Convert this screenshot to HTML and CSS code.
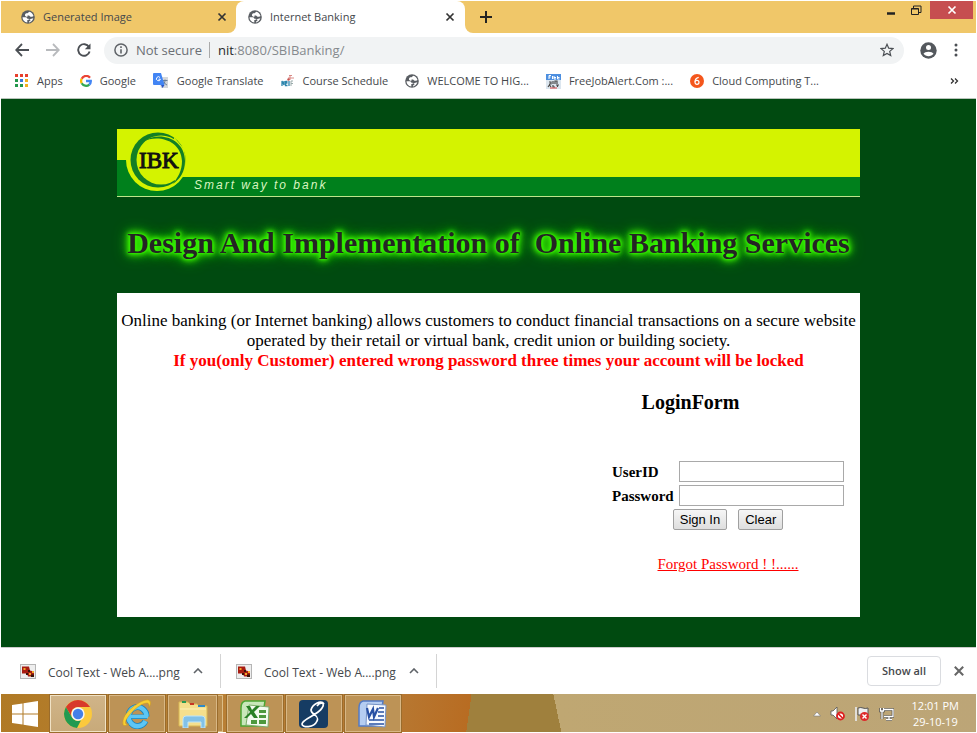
FILE: index.html
```html
<!DOCTYPE html>
<html lang="en">
<head>
<meta charset="utf-8">
<title>Internet Banking</title>
<link rel="stylesheet" href="styles.css">
</head>
<body>
<svg class="defs" width="0" height="0" aria-hidden="true">
  <symbol id="globe" viewBox="0 0 14 14">
    <circle cx="7" cy="7" r="6.800" fill="#5a5e63"/>
    <path d="M1.500 7.200h3.300c1.200 0 1.500.8 1.500 1.500h1.400v1.300H6.300v2.500C3.500 12 1.500 10 1.500 7.200zM12.300 8.300C11.800 10.600 10 12.200 8 12.500v-1.300h1.300V9.500H7.500M5 3.300h1.500L8.300 1.700c2 .5 3.600 2 4.200 4.300l-1.300.8H9.500L8 5.500H6.500v1.300H5.200L4 5.800V4.500z" fill="#fff"/>
  </symbol>
  <symbol id="cross" viewBox="0 0 10 10"><path d="M1.500 1.500l7 7m0-7l-7 7" fill="none" stroke="currentColor" stroke-width="1.700"/></symbol>
  <symbol id="chevron" viewBox="0 0 10 6"><path d="M1 5l4-4 4 4" fill="none" stroke="#5f6368" stroke-width="1.600"/></symbol>
  <symbol id="png" viewBox="0 0 16 15">
    <rect x=".5" y=".5" width="15" height="14" fill="#eee" stroke="#b5b5b5"/>
    <path d="M2 2.500h7l1 4 4 1v5H8l-1-3H2z" fill="#a81c12"/>
    <path d="M3.500 4h2v2h-2zM9 9h2v2H9zM12 7h2v2h-2z" fill="#f4a72a"/>
    <path d="M8 6h2v2H8zM11 10.500h3V13h-3zM6 9h2v2H6z" fill="#3a1208"/>
  </symbol>
</svg>

<header class="browser">
  <div class="tabstrip">
    <div class="tab">
      <svg class="icon14"><use href="#globe"/></svg>
      <span class="tab-title">Generated Image</span>
      <button class="plain" aria-label="Close tab"><svg class="icon10"><use href="#cross"/></svg></button>
    </div>
    <div class="tab active">
      <svg class="icon14"><use href="#globe"/></svg>
      <span class="tab-title">Internet Banking</span>
      <button class="plain" aria-label="Close tab"><svg class="icon10"><use href="#cross"/></svg></button>
    </div>
    <div class="tab-rest">
      <button class="plain" aria-label="New tab"><svg width="12" height="12" viewBox="0 0 12 12"><path d="M6 0v12M0 6h12" stroke="#222" stroke-width="2"/></svg></button>
      <div class="window-buttons">
        <button class="plain win" aria-label="Minimize"><svg width="10" height="12" viewBox="0 0 10 12"><path d="M1 9.500h8" stroke="#222" stroke-width="2.500"/></svg></button>
        <button class="plain win" aria-label="Restore"><svg width="11" height="11" viewBox="0 0 11 11"><path d="M.5 3.500h7v6h-7zM.5 4h7" fill="none" stroke="#222"/><path d="M2.500 3V1h7.500v6.500H8" fill="none" stroke="#222"/></svg></button>
        <button class="plain win close" aria-label="Close"><svg class="icon10"><use href="#cross"/></svg></button>
      </div>
    </div>
  </div>

  <div class="toolbar">
    <button class="plain" aria-label="Back"><svg width="14" height="14" viewBox="0 0 14 14"><path d="M14 7H1.500M7 1L1.200 7 7 13" fill="none" stroke="#4b4f54" stroke-width="1.800"/></svg></button>
    <button class="plain" aria-label="Forward"><svg width="14" height="14" viewBox="0 0 14 14"><path d="M0 7h12.500M7 1l5.800 6L7 13" fill="none" stroke="#b8babd" stroke-width="1.800"/></svg></button>
    <button class="plain" aria-label="Reload"><svg width="14" height="14" viewBox="0 0 14 14"><path d="M12 4a5.800 5.800 0 1 0 .6 4.500" fill="none" stroke="#4b4f54" stroke-width="1.900"/><path d="M13.500.5v5.700H7.800z" fill="#4b4f54"/></svg></button>
    <div class="address">
      <svg width="14" height="14" viewBox="0 0 14 14"><circle cx="7" cy="7" r="6.100" fill="none" stroke="#5f6368" stroke-width="1.500"/><path d="M7 6.200v4.300M7 3.300v1.700" stroke="#5f6368" stroke-width="1.600"/></svg>
      <span class="secure">Not secure</span>
      <span class="url"><span class="host">nit</span>:8080/SBIBanking/</span>
      <svg class="star" width="14" height="14" viewBox="0 0 14 14"><path d="M7 1.300l1.700 3.900 4.200.4-3.200 2.800 1 4.200L7 10.400l-3.700 2.200 1-4.200L1.100 5.600l4.200-.4z" fill="none" stroke="#4b4f54" stroke-width="1.200"/></svg>
    </div>
    <svg width="17" height="17" viewBox="0 0 17 17"><circle cx="8.500" cy="8.500" r="8.200" fill="#54585d"/><circle cx="8.500" cy="5.600" r="2.500" fill="#fff"/><path d="M3.500 11.800c1-2.700 9-2.700 10 0-2.300 3.300-7.700 3.300-10 0z" fill="#fff"/></svg>
    <button class="plain" aria-label="Menu"><svg width="4" height="14" viewBox="0 0 4 14"><g fill="#4b4f54"><circle cx="2" cy="2" r="1.500"/><circle cx="2" cy="7" r="1.500"/><circle cx="2" cy="12" r="1.500"/></g></svg></button>
  </div>

  <nav class="bookmarks" aria-label="Bookmarks">
    <a href="#"><svg width="14" height="14" viewBox="0 0 14 14"><path d="M0 0h3v3H0zM5 0h3v3H5zM10 0h3v3h-3z" fill="#e8402c"/><path d="M0 5h3v3H0z" fill="#23984c"/><path d="M5 5h3v3H5z" fill="#3878dd"/><path d="M10 5h3v3h-3z" fill="#f2b01e"/><path d="M0 10h3v3H0zM5 10h3v3H5z" fill="#23984c"/><path d="M10 10h3v3h-3z" fill="#f2b01e"/></svg>Apps</a>
    <a href="#"><svg width="12" height="12" viewBox="0 0 12 12"><g fill="none" stroke-width="2.300"><path d="M10 2.700A5 5 0 0 0 1.700 3.700" stroke="#ea4335"/><path d="M1.700 3.700a5 5 0 0 0 0 4.600" stroke="#fbbc05"/><path d="M1.700 8.300A5 5 0 0 0 9.300 9.600" stroke="#34a853"/><path d="M9.300 9.600A4.500 4.500 0 0 0 10.800 6H6" stroke="#4285f4"/></g></svg>Google</a>
    <a href="#"><svg width="16" height="16" viewBox="0 0 16 16"><path d="M5 4h10v11H8z" fill="#d4d7db"/><path d="M9.500 7.500h5M12 6.500v1c0 2-1 3.500-2.500 4.500M10.500 8.500c.6 1.500 1.800 2.600 3.500 3.500" fill="none" stroke="#6b7f98"/><path d="M0 1q0-1 1-1h7l3.500 12H1q-1 0-1-1z" fill="#4285f4"/><path d="M7 4.500a2 2 0 1 0 .4 1.700H5.500" fill="none" stroke="#fff"/><path d="M8 12h3.500L9.500 15z" fill="#2a56c6"/></svg>Google Translate</a>
    <a href="#"><svg width="14" height="14" viewBox="0 0 14 14"><path d="M1 12V7l2 4V7M4.500 7v4.500h2M4.500 9h2M4.500 7.500h2M8 7v5" fill="none" stroke="#2e86ad" stroke-width="1.300"/><path d="M7 4h6M9 2v4M8 1.500h3" fill="none" stroke="#d98a86"/><path d="M10 12V7h2M10 9.500h2" fill="none" stroke="#9aa"/><circle cx="7.500" cy="5.500" r="1.200" fill="#c9524f"/></svg>Course Schedule</a>
    <a href="#"><svg class="icon14"><use href="#globe"/></svg>WELCOME TO HIG...</a>
    <a href="#"><svg width="15" height="15" viewBox="0 0 15 15"><rect width="15" height="15" fill="#dce6ef"/><path d="M0 0h15v6H0z" fill="#4d8fe0"/><path d="M3 5V1.500h2M3 3h1.500M6.500 5V2M8 2v3h2M8 3.500h2M11.500 2v3h2M11.500 3.500h2" stroke="#fff" fill="none"/><path d="M3 8h2v2H3M7 7v3M9 10V7h2v3M2 13l1.500-2L5 13M7 11v2h2M10 11h3M11.500 11v2" fill="none" stroke="#4a4a4a" stroke-width="1.200"/><path d="M4 14h7" stroke="#dd4444"/></svg>FreeJobAlert.Com :...</a>
    <a href="#"><svg width="14" height="14" viewBox="0 0 14 14"><circle cx="7" cy="7" r="7" fill="#f4561c"/><path d="M8.700 3.300C6 4 5 5.600 5 7.800" fill="none" stroke="#fff" stroke-width="1.200"/><circle cx="7" cy="8.300" r="2" fill="none" stroke="#fff" stroke-width="1.200"/></svg>Cloud Computing T...</a>
    <button class="plain more" aria-label="More bookmarks"><svg width="9" height="8" viewBox="0 0 9 8"><path d="M1 1.500L3.500 4 1 6.500M5 1.500L7.500 4 5 6.500" fill="none" stroke="#333" stroke-width="1.300"/></svg></button>
  </nav>
</header>

<main class="page">
  <div class="banner">
    <svg class="logo" width="72" height="67" viewBox="0 0 72 67" role="img" aria-label="IBK">
      <path d="M0 31h14v17h58v19H0z" fill="#00801c"/>
      <circle cx="40" cy="31" r="31" fill="#d4f300"/>
      <circle cx="41" cy="31" r="27.500" fill="#137f25"/>
      <circle cx="44" cy="31" r="24.500" fill="#d4f300"/>
      <path d="M57 8l10 12 2 22-11 14z" fill="#d4f300"/>
      <path d="M26 13C41 1 68 9 68 32c0 11-5 18-12 23 5-7 9-13 9-23C64 11 40 5 26 13z" fill="#137f25"/>
      <text class="logo-text" x="22" y="39">IBK</text>
    </svg>
    <div class="stripe"><span>Smart way to bank</span></div>
  </div>
  <h1>Design And Implementation of  Online Banking Services</h1>
  <section class="panel">
    <p>Online banking (or Internet banking) allows customers to conduct financial transactions on a secure website operated by their retail or virtual bank, credit union or building society.</p>
    <p class="warning">If you(only Customer) entered wrong password three times your account will be locked</p>
    <form class="login">
      <h2>LoginForm</h2>
      <div class="fields">
        <label for="user">UserID</label><input id="user" type="text">
        <label for="pass">Password</label><input id="pass" type="password">
      </div>
      <div class="actions"><button type="button">Sign In</button><button type="reset">Clear</button></div>
      <a class="forgot" href="#">Forgot Password ! !......</a>
    </form>
  </section>
</main>

<footer>
  <div class="downloads">
    <div class="download"><svg width="16" height="15"><use href="#png"/></svg><span>Cool Text - Web A....png</span><button class="plain" aria-label="Options"><svg width="10" height="6"><use href="#chevron"/></svg></button></div>
    <div class="download"><svg width="16" height="15"><use href="#png"/></svg><span>Cool Text - Web A....png</span><button class="plain" aria-label="Options"><svg width="10" height="6"><use href="#chevron"/></svg></button></div>
    <button class="show-all">Show all</button>
    <button class="plain dismiss" aria-label="Close downloads"><svg width="12" height="12"><use href="#cross"/></svg></button>
  </div>
  <div class="taskbar">
    <button class="plain start" aria-label="Start"><svg width="26" height="26" viewBox="0 0 26 26"><path d="M0 4l10.500-1.600v10H0zM11.500 2.200L26 0v12.400H11.500zM0 13.500h10.500v10L0 22zM11.500 13.500H26V26l-14.500-2.200z" fill="#fff"/></svg></button>
    <button class="task current" aria-label="Chrome"><svg width="30" height="30" viewBox="0 0 30 30"><circle cx="15" cy="15" r="14" fill="#fbc93d"/><path d="M2.900 8A14 14 0 0 1 27.100 8H15A7 7 0 0 0 9 18.500z" fill="#d8392b"/><path d="M2.900 8L9 18.500A7 7 0 0 0 18 21.300L14 29A14 14 0 0 1 2.900 8z" fill="#229a51"/><circle cx="15" cy="15" r="6.700" fill="#f5f5f5"/><circle cx="15" cy="15" r="5.200" fill="#437fe8"/></svg></button>
    <button class="task" aria-label="Internet Explorer"><svg width="30" height="30" viewBox="0 0 30 30"><path d="M25.500 17H8M25 18.500H9" stroke="#1582bd" stroke-width="3"/><path d="M24.500 17.500A9 9.500 0 1 0 23.500 22" fill="none" stroke="#1582bd" stroke-width="6"/><path d="M24.500 17.500A9 9.500 0 1 0 23.500 22" fill="none" stroke="#5cc6f5" stroke-width="4.500"/><path d="M26 17.500H8" stroke="#5cc6f5" stroke-width="3.500"/><path d="M7 25q-5 3-6 .5Q-1 17 12 7 25-2 28 2q1.500 2-1 7 .5-5-2-5-5 0-13 7-9 9-8.500 13 .5 2.500 3.500 1z" fill="#f8cf31" stroke="#c9951c" stroke-width=".5"/></svg></button>
    <button class="task folder" aria-label="File Explorer"><svg width="30" height="28" viewBox="0 0 30 28"><path d="M1 2h9l2 2h7l2 2h8v20H1z" fill="#f5df8c" stroke="#d9b752"/><path d="M4 1h4v2H4z" fill="#299b52"/><path d="M12 3h4v2h-4z" fill="#c93524"/><path d="M20 5h7v2h-7z" fill="#2f89c8"/><path d="M2 9h26" stroke="#fff2b8"/><path d="M5 28v-9q0-3 3-3h16q3 0 3 3v9h-4v-6H10v6z" fill="#82c1e7" stroke="#bee5fa"/></svg></button>
    <span class="stack"></span>
    <button class="task" aria-label="Excel"><svg width="30" height="28" viewBox="0 0 30 28"><path d="M5 1h20l-4 25H1V8q0-6 4-7z" fill="#c8e7ba" stroke="#4ba532" stroke-width="1.500"/><path d="M9 5l20 2-1 20-22-2z" fill="#f2faef" stroke="#7cac6a"/><path d="M6 6h4l2 4 4-4h4l-6 6 4 6h-4l-3-4-4 4H4l6-6z" fill="#298026"/><path d="M19 10h7v3h-7zM19 15h7v3h-7zM11 20h6v4h-6zM19 20h7v4h-7z" fill="#4e993e"/></svg></button>
    <button class="task" aria-label="Script editor"><svg width="30" height="28" viewBox="0 0 30 28"><rect width="29" height="28" rx="4" fill="#163c63"/><path d="M25 4C22-1 13 5 12 10c0 5 9 5 6 11-3 7-15 7-15 3 0-5 16-9 20-16 4-6-2-6-5-2" fill="none" stroke="#fff" stroke-width="1.700"/></svg></button>
    <button class="task" aria-label="Word"><svg width="30" height="28" viewBox="0 0 30 28"><path d="M5 1h20l-4 25H1V8q0-6 4-7z" fill="#b5cdf1" stroke="#537bc5" stroke-width="1.500"/><path d="M9 4l19 1-1 22-19-2z" fill="#f7faff" stroke="#7693c6"/><path d="M9 8l2 9 4-8 1 8 4-9" fill="none" stroke="#2851a4" stroke-width="2.200"/><path d="M21 8h5M20 12h6M20 16h6M11 20h15M11 24h15" stroke="#2851a4" stroke-width="1.700"/></svg></button>
    <div class="tray">
      <svg width="8" height="6" viewBox="0 0 8 6"><path d="M.5 5L4 1l3.500 4z" fill="#fff" stroke="#777" stroke-width=".6"/></svg>
      <svg width="15" height="15" viewBox="0 0 15 15"><path d="M1 5h2l4-4v12L3 9H1z" fill="#fff" stroke="#555" stroke-width=".8"/><circle cx="10.500" cy="10" r="3.500" fill="#fff" stroke="#dd2020" stroke-width="1.800"/><path d="M8 7.500l5 5" stroke="#dd2020" stroke-width="1.700"/></svg>
      <svg width="16" height="16" viewBox="0 0 16 16"><path d="M2 1v14M4 2q3-1 5 0t5 0v7H4z" fill="#eee" stroke="#555"/><path d="M2 1v14" stroke="#fff" stroke-width="1.500"/><circle cx="10.500" cy="10.500" r="4.500" fill="#dd2b2b"/><path d="M8.500 8.500l4 4m0-4l-4 4" stroke="#fff" stroke-width="1.400"/></svg>
      <svg width="15" height="14" viewBox="0 0 15 14"><path d="M5 2.500h9v7H5M7 12.500h6M10 10v2M1.500 1v3h3V1M3 4v8" fill="none" stroke="#444" stroke-width="2.600"/><path d="M5 2.500h9v7H5M7 12.500h6M10 10v2M1.500 1v3h3V1M3 4v8" fill="none" stroke="#fff" stroke-width="1.300"/></svg>
      <div class="clock"><span>12:01 PM</span><span>29-10-19</span></div>
    </div>
  </div>
</footer>
</body>
</html>
```
FILE: styles.css
```css
* { box-sizing: border-box; }
body {
  margin: 0;
  padding: 1px;
  min-height: 100vh;
  display: flex;
  flex-direction: column;
  background: #fff;
  font: 12px/16px "Open Sans", "Noto Sans", sans-serif;
  color: #45484c;
}
svg { display: block; flex: none; }
a { color: inherit; text-decoration: none; }
button { font: inherit; }
.defs { position: absolute; }
.plain { padding: 0; border: 0; background: none; color: #333; }
.icon14 { width: 14px; height: 14px; }
.icon10 { width: 10px; height: 10px; }

.tabstrip { display: flex; height: 32px; background: linear-gradient(#f0c769 50%, #fff 50%); }
.tab {
  flex: 0 0 235px;
  display: flex;
  align-items: center;
  gap: 8px;
  padding: 0 9px 0 20px;
  background: #f0c769;
  border-bottom-right-radius: 8px;
}
.tab.active { flex-basis: 229px; padding: 0 10px 0 12px; background: #fff; border-radius: 8px 8px 0 0; }
.tab-title { flex: 1; white-space: nowrap; font-size: 11px; }
.tab-rest {
  flex: 1;
  display: flex;
  align-items: center;
  justify-content: space-between;
  padding-left: 15px;
  background: #f0c769;
  border-bottom-left-radius: 8px;
}
.window-buttons { display: flex; align-self: flex-start; gap: 15px; height: 18px; padding-right: 3px; }
.win { display: flex; align-items: center; }
.close { width: 43px; justify-content: center; background: #c64e50; color: #fff; margin-left: -7px; }

.toolbar { display: flex; align-items: center; gap: 17px; height: 34px; padding: 0 18px 0 14px; }
.address {
  flex: 1;
  display: flex;
  align-items: center;
  height: 27px;
  margin: 0 -1px 0 -4px;
  padding: 0 10px;
  border-radius: 14px;
  background: #f1f3f4;
  font-size: 13px;
}
.secure { margin-left: 8px; padding-right: 7px; border-right: 1px solid #aaa; color: #6b6f74; }
.url { margin-left: 8px; color: #85898d; }
.host { color: #26282b; }
.star { margin-left: auto; }

.bookmarks { display: flex; align-items: center; gap: 17px; height: 32px; padding: 0 17px 3px 14px; border-bottom: 1px solid #b9c4bb; font-size: 11px; white-space: nowrap; }
.bookmarks a { display: flex; align-items: center; gap: 8px; }
.more { margin-left: auto; }

.page { flex: 1; padding: 30px 116px; background: #004a10; color: #000; font-family: "Liberation Serif", serif; }
.banner { position: relative; height: 68px; display: flex; flex-direction: column; justify-content: flex-end; background: #d4f300; border-bottom: 1px solid #bfe58a; }
.logo { position: absolute; left: 0; top: 0; }
.logo-text { font: 23px "Liberation Serif", serif; fill: #111; stroke: #111; stroke-width: 1px; }
.stripe { height: 19px; padding-left: 77px; background: #00801c; color: #d9f5c0; font: italic 12px/17px "Liberation Sans", sans-serif; letter-spacing: 2px; }
h1 {
  margin: 0;
  padding: 18px 0 22px;
  color: #242424;
  font-size: 30px;
  line-height: 56px;
  text-align: center;
  white-space: pre;
  text-shadow: 0 0 2px #3cff00, 0 0 4px #3cff00, 0 0 6px #3cff00, 0 0 8px #3cff00, 0 0 12px #32e800, 0 0 16px #2bd000;
}
.panel { min-height: 324px; padding: 18px 0 40px; background: #fff; text-align: center; font-size: 17px; line-height: 20px; }
.panel p { margin: 0; }
.panel .warning { color: #f00; font-weight: bold; }
.login { width: 232px; margin: 19px 16px 0 auto; }
h2 { margin: 0 75px 47px 0; font-size: 20px; line-height: 24px; }
.fields { display: grid; grid-template-columns: auto 165px; justify-content: space-between; row-gap: 3px; align-items: center; text-align: left; font-size: 15px; font-weight: bold; }
.fields input { width: 100%; height: 21px; border: 1px solid #a9a9a9; background: #fff; }
.actions { display: flex; justify-content: center; gap: 11px; margin: 3px 0 24px; }
.actions button { height: 21px; padding: 0 6px; border: 1px solid #a0a0a0; border-radius: 2px; background: linear-gradient(#f6f6f6, #dedede); color: #000; font: 13px/17px "Liberation Sans", sans-serif; }
.forgot { color: #f00; font-size: 15px; text-decoration: underline; }

.downloads { display: flex; align-items: center; height: 47px; padding-right: 11px; border-top: 1px solid #ccc; }
.download { flex: none; display: flex; align-items: center; width: 220px; height: 34px; padding: 0 17px 0 19px; border-right: 1px solid #d4d4d4; white-space: nowrap; font-size: 12px; }
.download + .download { width: 216px; padding-left: 15px; }
.download span { flex: 1; padding: 3px 0 0 12px; }
.show-all { height: 30px; margin-left: auto; padding: 0 14px; border: 1px solid #dadce0; border-radius: 4px; background: #fff; color: #45484c; font-size: 11px; font-weight: 600; }
.dismiss { margin-left: 12px; color: #666; }
.taskbar {
  display: flex;
  align-items: stretch;
  gap: 3px;
  height: 38px;
  padding: 1px 17px 0 0;
  background: linear-gradient(78deg, transparent 57%, #bfa772 57%, #bca577 100%), linear-gradient(98deg, #b07a25 0%, #b98035 20%, #b77933 40%, #b86c22 48%, #9f803d 48%);
}
.start { width: 49px; padding-left: 11px; margin-right: -3px; }
.task { display: flex; align-items: center; justify-content: center; width: 56px; padding: 0; border: 1px solid #d8b785; background: #bd9356; box-shadow: 0 0 0 1px #9a6c2c; }
.current { background: linear-gradient(#d0b488, #c8aa7a); border-color: #f0e2c5; }
.folder { width: 49px; }
.stack { width: 5px; margin: 0 1px 0 -2px; border: solid #dbbd87; border-width: 1px 1px 1px 0; background: #b98b4a; }
.tray { display: flex; align-items: center; gap: 9px; margin-left: auto; color: #fff; }
.clock { display: flex; flex-direction: column; margin-left: 9px; text-align: center; font-size: 11px; line-height: 16px; }
```
